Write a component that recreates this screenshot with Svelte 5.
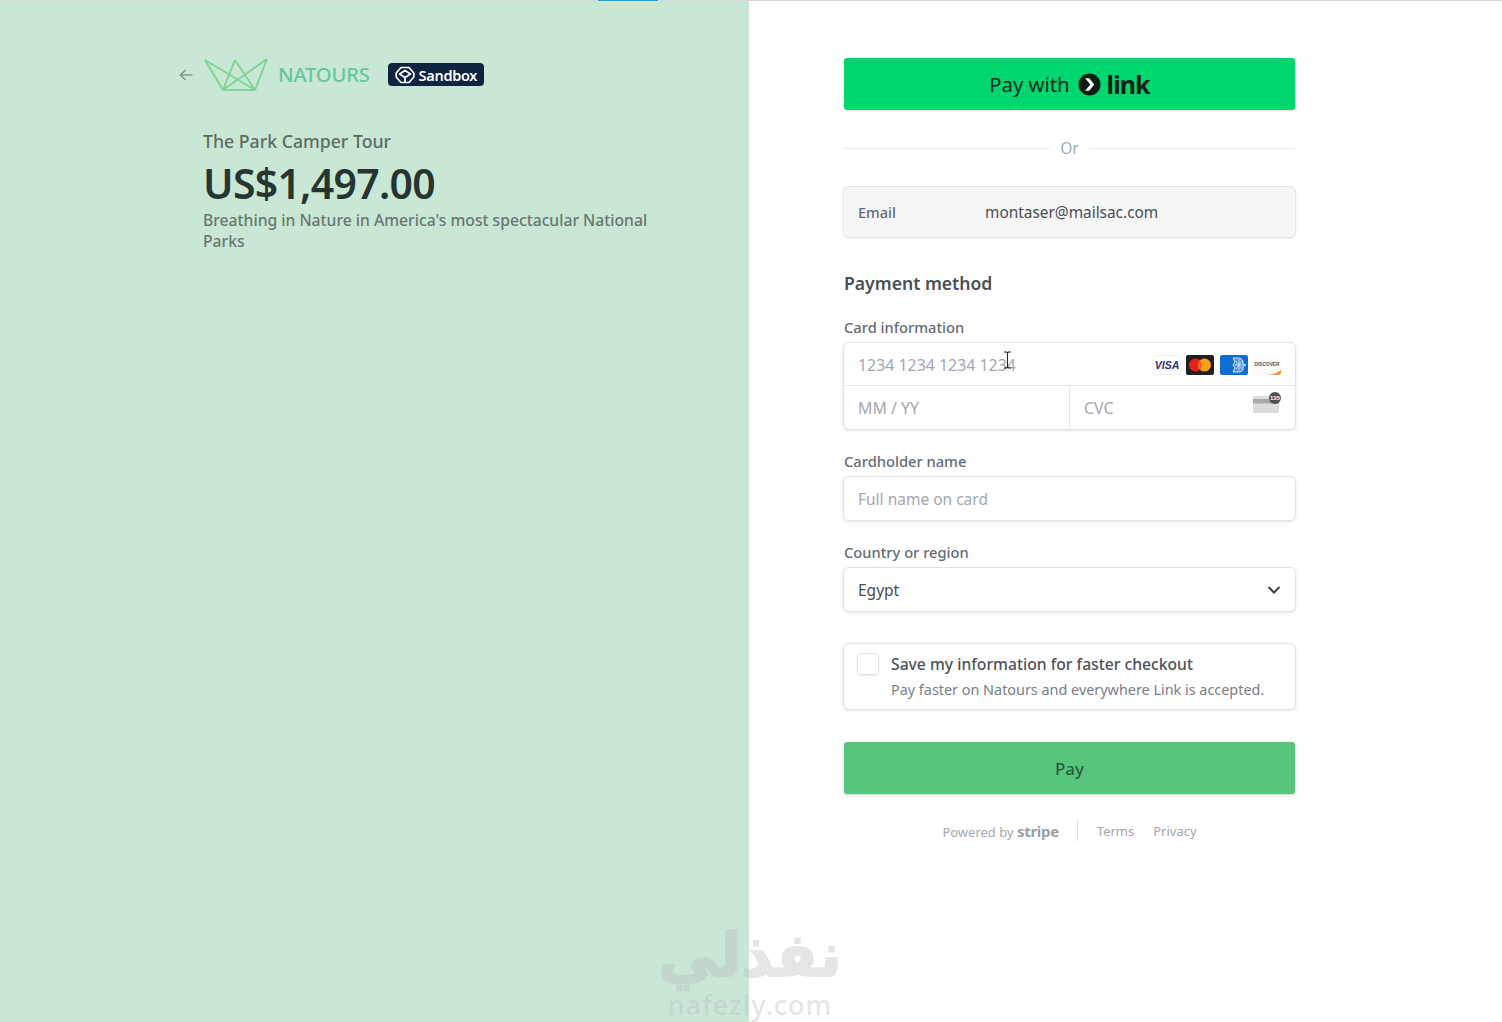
<script lang="ts">
  const crownLines = 'M1 3 L19 33 H51 L63 2 M1 3 L51 33 M63 2 L19 33 M31 3 L19 33 M31 3 L51 33';
</script>

<div class="page">
  <div class="topbar"><span class="progress"></span></div>

  <main class="checkout">
    <section class="summary">
      <header class="brand">
        <svg class="back" viewBox="0 0 16 16" width="16" height="16" aria-hidden="true">
          <path d="M14.5 8H2.5M7.5 3l-5 5 5 5" fill="none" stroke="#7d9a8b" stroke-width="1.6" />
        </svg>
        <svg class="crown" viewBox="0 0 64 36" width="64" height="36" aria-hidden="true">
          <path d={crownLines} fill="none" stroke="#7fd497" stroke-width="2" stroke-linejoin="round" />
        </svg>
        <span class="name">NATOURS</span>
        <span class="sandbox">
          <svg viewBox="0 0 20 18" width="20" height="18" aria-hidden="true">
            <path d="M6 1.500h8L18.800 7v4L14 16.500H6L1.200 11V7ZM10 4.500 15.500 8 10 11.500 4.500 8ZM10 11.500v5" fill="none" stroke="#fff" stroke-width="1.700" stroke-linejoin="round" />
          </svg>
          Sandbox
        </span>
      </header>
      <div class="product">
        <div class="tour">The Park Camper Tour</div>
        <div class="price">US$1,497.00</div>
        <p class="desc">Breathing in Nature in America's most spectacular National Parks</p>
      </div>
    </section>

    <section class="pay">
      <button class="link-btn">
        Pay with
        <svg viewBox="0 0 24 24" width="23" height="23" aria-hidden="true">
          <circle cx="12" cy="12" r="11.5" fill="#0b1f14" />
          <path d="M7.5 5.500h4.200l5.300 6.500-5.300 6.500H7.500l5.300-6.500Z" fill="#fff" />
        </svg>
        <span class="link-word">link</span>
      </button>

      <div class="or"><span>Or</span></div>

      <div class="email">
        <span class="email-label">Email</span>
        <span class="email-value">montaser@mailsac.com</span>
      </div>

      <h2>Payment method</h2>

      <div class="field-label">Card information</div>
      <div class="card-box">
        <div class="card-row number">
          <span class="ph num">1234 1234 1234 1234</span>
          <span class="brands">
            <svg viewBox="0 0 28 20" width="28" height="20" aria-hidden="true">
              <rect x="0.500" y="0.500" width="27" height="19" rx="2" fill="#fff" stroke="#f0f0f4" />
              <text x="14" y="14" text-anchor="middle" class="visa">VISA</text>
            </svg>
            <svg viewBox="0 0 28 20" width="28" height="20" aria-hidden="true">
              <rect width="28" height="20" rx="2" fill="#231f20" />
              <circle cx="9.500" cy="10" r="6.500" fill="#e5231b" />
              <circle cx="18.500" cy="10" r="6.500" fill="#f79e1b" />
              <path d="M14 5.300a6.500 6.500 0 0 1 0 9.400 6.500 6.500 0 0 1 0-9.400Z" fill="#f2641f" />
            </svg>
            <svg viewBox="0 0 28 20" width="28" height="20" aria-hidden="true">
              <rect width="28" height="20" rx="2" fill="#0f6fd1" />
              <path d="M13 3h7l3 3v3l3 1-3 2v3l-3 2h-7l2-4-2-3 2-3Z" fill="#4d93dc" stroke="#d5e7f9" stroke-width="1" />
              <path d="M15 10h9M19 4v12M16 6l6 8M22 6l-6 8" stroke="#d5e7f9" stroke-width="0.800" />
            </svg>
            <svg viewBox="0 0 28 20" width="28" height="20" aria-hidden="true">
              <rect width="28" height="20" rx="2" fill="#fbfbfb" />
              <text x="14" y="11" text-anchor="middle" class="disc">DISCOVER</text>
              <path d="M12 20c7 0 12-2 16-5v3a2 2 0 0 1-2 2Z" fill="#ee9a3a" />
            </svg>
          </span>
        </div>
        <div class="card-row split">
          <div class="cell"><span class="ph num">MM / YY</span></div>
          <div class="cell cvc">
            <span class="ph num">CVC</span>
            <svg viewBox="0 0 30 22" width="30" height="22" aria-hidden="true">
              <rect x="1" y="4" width="26" height="17" rx="1.500" fill="#dcdcdc" />
              <rect x="1" y="7" width="26" height="4.500" fill="#a9a9a9" />
              <circle cx="23" cy="6" r="6" fill="#4f4f4f" />
              <text x="23" y="8" text-anchor="middle" class="cvc-num">135</text>
            </svg>
          </div>
        </div>
      </div>

      <div class="field-label">Cardholder name</div>
      <div class="input"><span class="ph">Full name on card</span></div>

      <div class="field-label">Country or region</div>
      <div class="input select">
        <span class="val">Egypt</span>
        <svg viewBox="0 0 14 10" width="14" height="10" aria-hidden="true">
          <path d="M1.500 2 7 7.500 12.500 2" fill="none" stroke="#3c4043" stroke-width="2" />
        </svg>
      </div>

      <div class="save">
        <span class="check"></span>
        <div>
          <div class="save-title">Save my information for faster checkout</div>
          <div class="save-sub">Pay faster on Natours and everywhere Link is accepted.</div>
        </div>
      </div>

      <button class="pay-btn">Pay</button>

      <footer class="foot">
        <span class="powered">Powered by <b>stripe</b></span>
        <span class="sep"></span>
        <span class="foot-link">Terms</span>
        <span class="foot-link">Privacy</span>
      </footer>
    </section>
  </main>

  <!-- I-beam pointer captured in the recording -->
  <svg class="ibeam" viewBox="0 0 9 18" width="9" height="18" aria-hidden="true">
    <path d="M1 1h2.500l1 1 1-1H8M4.500 2v14M1 17h2.500l1-1 1 1H8" fill="none" stroke="#222" stroke-width="1.100" />
  </svg>

  <div class="watermark" lang="ar" dir="rtl">
    <div class="wm-ar">نفذلي</div>
    <div class="wm-en" dir="ltr">nafezly.com</div>
  </div>
</div>

<style>
  :global(body) {
    margin: 0;
    background: #fff;
  }
  .page {
    position: relative;
    width: 1502px;
    height: 1022px;
    overflow: hidden;
    font-family: "Noto Sans", "Open Sans", sans-serif;
    color: #30313d;
  }
  .topbar {
    position: absolute;
    top: 0;
    left: 0;
    right: 0;
    height: 1px;
    background: #d8d8d8;
  }
  .progress {
    position: absolute;
    left: 598px;
    width: 60px;
    height: 1px;
    background: #1e9bd0;
  }
  .checkout {
    display: grid;
    grid-template-columns: 749px 1fr;
    height: 100%;
  }
  .summary {
    background: #c8e8d5;
    padding: 57px 0 0 178px;
  }
  .brand {
    display: flex;
    align-items: center;
    height: 36px;
  }
  .back {
    margin-right: 10px;
  }
  .crown {
    margin-right: 10px;
  }
  .name {
    font-size: 20.200px;
    font-weight: 500;
    letter-spacing: -0.2px;
    color: #66c79b;
    margin: -2px 18px 0 0;
  }
  .sandbox {
    display: flex;
    align-items: center;
    gap: 4px;
    height: 23px;
    margin-top: -1px;
    padding: 0 7px 0 7px;
    background: #0f2440;
    border-radius: 4px;
    color: #fff;
    font-size: 14.500px;
    font-weight: 600;
    letter-spacing: -0.3px;
  }
  .product {
    padding: 36px 0 0 25px;
    width: 470px;
  }
  .tour {
    font-size: 17.700px;
    font-weight: 500;
    line-height: 24px;
    color: #5d6b63;
  }
  .price {
    font-size: 41px;
    font-weight: 600;
    line-height: 54px;
    letter-spacing: -0.75px;
    color: #26352f;
    margin-top: 3px;
  }
  .desc {
    margin: 0;
    font-size: 15.700px;
    font-weight: 500;
    line-height: 21px;
    color: #68776f;
  }
  .pay {
    padding: 58px 0 0 95px;
    width: 451px;
  }
  button {
    font-family: inherit;
    border: 0;
    display: flex;
    align-items: center;
    justify-content: center;
    width: 451px;
    height: 52px;
    border-radius: 3px;
    padding: 0;
  }
  .link-btn {
    gap: 8px;
    background: #00d66f;
    color: #0b2a1b;
    font-size: 20.300px;
    box-shadow: 0 1px 2px rgba(0, 0, 0, 0.1);
  }
  .link-word {
    font-size: 25px;
    font-weight: 700;
    letter-spacing: -0.9px;
    color: #0b1f14;
    margin-left: -2px;
  }
  .or {
    display: flex;
    align-items: center;
    gap: 10px;
    height: 20px;
    margin: 28px 0 28px;
    color: #a3acb9;
    font-size: 15.500px;
  }
  .or::before,
  .or::after {
    content: "";
    flex: 1;
    height: 1px;
    background: #ececec;
  }
  .email {
    display: flex;
    align-items: center;
    height: 50px;
    padding: 0 14px;
    margin: 0 -1px 32px;
    background: #f6f6f6;
    border: 1px solid #e6e6e6;
    border-radius: 6px;
    box-shadow: 0 1px 2px rgba(0, 0, 0, 0.08);
    font-size: 15.400px;
  }
  .email-label {
    width: 127px;
    font-size: 14.500px;
    font-weight: 500;
    color: #666b74;
  }
  .email-value {
    color: #4a4c54;
  }
  h2 {
    margin: 0;
    font-size: 17.600px;
    font-weight: 600;
    line-height: 26px;
    color: #4a4f55;
  }
  .field-label {
    font-size: 14.700px;
    font-weight: 500;
    line-height: 20px;
    color: #666b74;
    margin: 21px 0 5px;
  }
  .card-box,
  .input,
  .save {
    box-sizing: border-box;
    margin-left: -1px;
    margin-right: -1px;
    background: #fff;
    border: 1px solid #e3e3e3;
    border-radius: 6px;
    box-shadow: 0 1px 3px rgba(0, 0, 0, 0.1);
  }
  .card-row {
    display: flex;
    align-items: center;
    justify-content: space-between;
    height: 43px;
  }
  .number {
    box-sizing: border-box;
    padding: 2px 14px 0;
    border-bottom: 1px solid #e6e6e6;
  }
  .split {
    align-items: stretch;
  }
  .ph {
    font-size: 15.500px;
    color: #a4a7ae;
  }
  .ph.num {
    font-size: 15.900px;
  }
  .brands {
    display: flex;
    gap: 5.500px;
  }
  .visa {
    font: italic 800 10.500px "Liberation Sans", sans-serif;
    fill: #27337a;
  }
  .disc {
    font: 700 4.800px "Liberation Sans", sans-serif;
    fill: #555;
  }
  .cvc-num {
    font: 700 6px "Liberation Sans", sans-serif;
    fill: #fff;
  }
  .cell {
    flex: 1;
    display: flex;
    align-items: center;
    justify-content: space-between;
    padding: 0 14px;
  }
  .cvc {
    border-left: 1px solid #e6e6e6;
  }
  .cvc svg {
    margin: -9px -1px 0 0;
  }
  .input {
    display: flex;
    align-items: center;
    height: 45px;
    padding: 0 14px;
  }
  .select {
    justify-content: space-between;
  }
  .val {
    font-size: 15.500px;
    color: #4a4c54;
  }
  .save {
    display: flex;
    gap: 13px;
    height: 67px;
    padding: 9px 13px;
    margin-top: 31px;
  }
  .check {
    box-sizing: border-box;
    flex: none;
    width: 22px;
    height: 22px;
    border: 1px solid #e3e3e3;
    border-radius: 4px;
    box-shadow: 0 1px 2px rgba(0, 0, 0, 0.08);
  }
  .save-title {
    font-size: 15.700px;
    font-weight: 500;
    line-height: 22px;
    color: #4f5157;
    margin-left: -1px;
  }
  .save-sub {
    font-size: 14.400px;
    line-height: 20px;
    margin: 5px 0 0 -1px;
    color: #7b7e85;
  }
  .pay-btn {
    margin-top: 32px;
    background: #57c67d;
    color: #2c5c3e;
    font-size: 17px;
    font-weight: 500;
    box-shadow: 0 1px 3px rgba(0, 0, 0, 0.2);
  }
  .foot {
    display: flex;
    align-items: center;
    justify-content: center;
    height: 20px;
    margin-top: 27px;
    font-size: 13px;
    color: #a3a6ac;
  }
  .powered b {
    font-size: 15px;
    letter-spacing: -0.3px;
    font-weight: 700;
    color: #9a9da3;
  }
  .sep {
    width: 1px;
    height: 20px;
    background: #dcdcdc;
    margin: 0 19px 0 18px;
  }
  .foot-link + .foot-link {
    margin-left: 19px;
  }
  .ibeam {
    position: absolute;
    left: 1003px;
    top: 351px;
  }
  .watermark {
    position: absolute;
    left: 655px;
    top: 919px;
    width: 190px;
    text-align: center;
    color: #bababa;
    opacity: 0.36;
    pointer-events: none;
  }
  .wm-ar {
    font: 700 60px/72px "DejaVu Sans", sans-serif;
    -webkit-text-stroke: 2px #bababa;
  }
  .wm-en {
    font: 500 27px/27px "Noto Sans", sans-serif;
    letter-spacing: 1px;
  }
</style>
